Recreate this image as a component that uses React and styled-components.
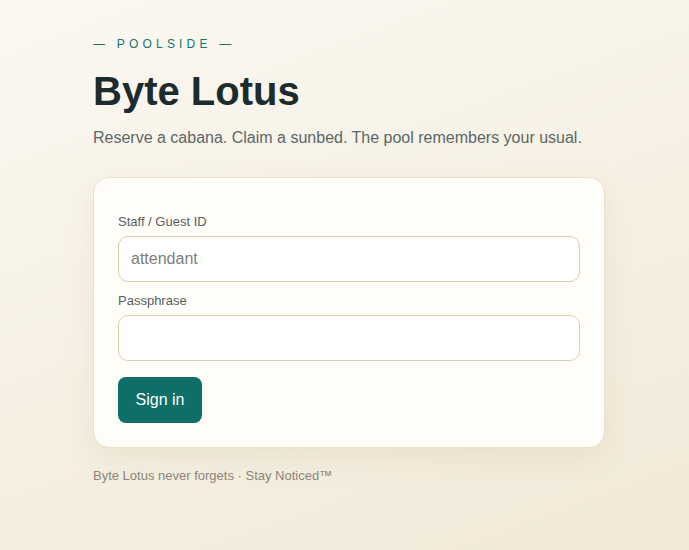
import React from "react";
import styled, { createGlobalStyle } from "styled-components";

const GlobalStyle = createGlobalStyle`
  html, body {
    margin: 0;
    padding: 0;
    min-height: 100%;
  }
  body {
    font-family: "Liberation Sans", Arial, sans-serif;
    background: linear-gradient(160deg, #fbf8f1 0%, #f6f0e3 55%, #f2e9d7 100%);
    min-height: 100vh;
  }
  * { box-sizing: border-box; }
`;

const Page = styled.main`
  min-height: 550px;
  padding: 37px 0 40px 93px;
`;

const Column = styled.div`
  width: 512px;
`;

const Eyebrow = styled.div`
  font-size: 12px;
  letter-spacing: 0.35em;
  color: #127770;
  line-height: 14px;
`;

const Title = styled.h1`
  margin: 16px 0 0;
  font-size: 40px;
  line-height: 48px;
  font-weight: 700;
  color: #1c2b2d;
`;

const Lead = styled.p`
  margin: 12px 0 0;
  font-size: 16px;
  line-height: 22px;
  color: #5b6766;
`;

const Card = styled.form`
  margin-top: 28px;
  background: #fffdf8;
  border: 1px solid #e9e0cc;
  border-radius: 16px;
  padding: 36px 24px 24px;
  box-shadow: 0 10px 30px rgba(150, 120, 60, 0.1);
  display: flex;
  flex-direction: column;
`;

const Field = styled.label`
  display: flex;
  flex-direction: column;
  gap: 7px;
  margin-bottom: ${(p) => p.$gap}px;
`;

const Label = styled.span`
  font-size: 13px;
  line-height: 15px;
  color: #56615f;
`;

const Input = styled.input`
  height: 46px;
  border: 1px solid #dccfae;
  border-radius: 10px;
  background: #ffffff;
  padding: 0 12px;
  font-family: inherit;
  font-size: 16px;
  color: #1c2b2d;
  outline: none;

  &::placeholder {
    color: #7b7f7c;
  }
`;

const Button = styled.button`
  align-self: flex-start;
  height: 46px;
  min-width: 84px;
  padding: 0 17px;
  border: none;
  border-radius: 8px;
  background: #106e68;
  color: #ffffff;
  font-family: inherit;
  font-size: 16px;
  cursor: pointer;
`;

const Footer = styled.p`
  margin: 20px 0 0;
  font-size: 13px;
  line-height: 15px;
  color: #8b8579;
`;

export default function App() {
  return (
    <>
      <GlobalStyle />
      <Page>
        <Column>
          <Eyebrow>— POOLSIDE —</Eyebrow>
          <Title>Byte Lotus</Title>
          <Lead>Reserve a cabana. Claim a sunbed. The pool remembers your usual.</Lead>
          <Card onSubmit={(e) => e.preventDefault()}>
            <Field $gap={11}>
              <Label>Staff / Guest ID</Label>
              <Input type="text" placeholder="attendant" />
            </Field>
            <Field $gap={16}>
              <Label>Passphrase</Label>
              <Input type="password" />
            </Field>
            <Button type="submit">Sign in</Button>
          </Card>
          <Footer>Byte Lotus never forgets · Stay Noticed™</Footer>
        </Column>
      </Page>
    </>
  );
}
